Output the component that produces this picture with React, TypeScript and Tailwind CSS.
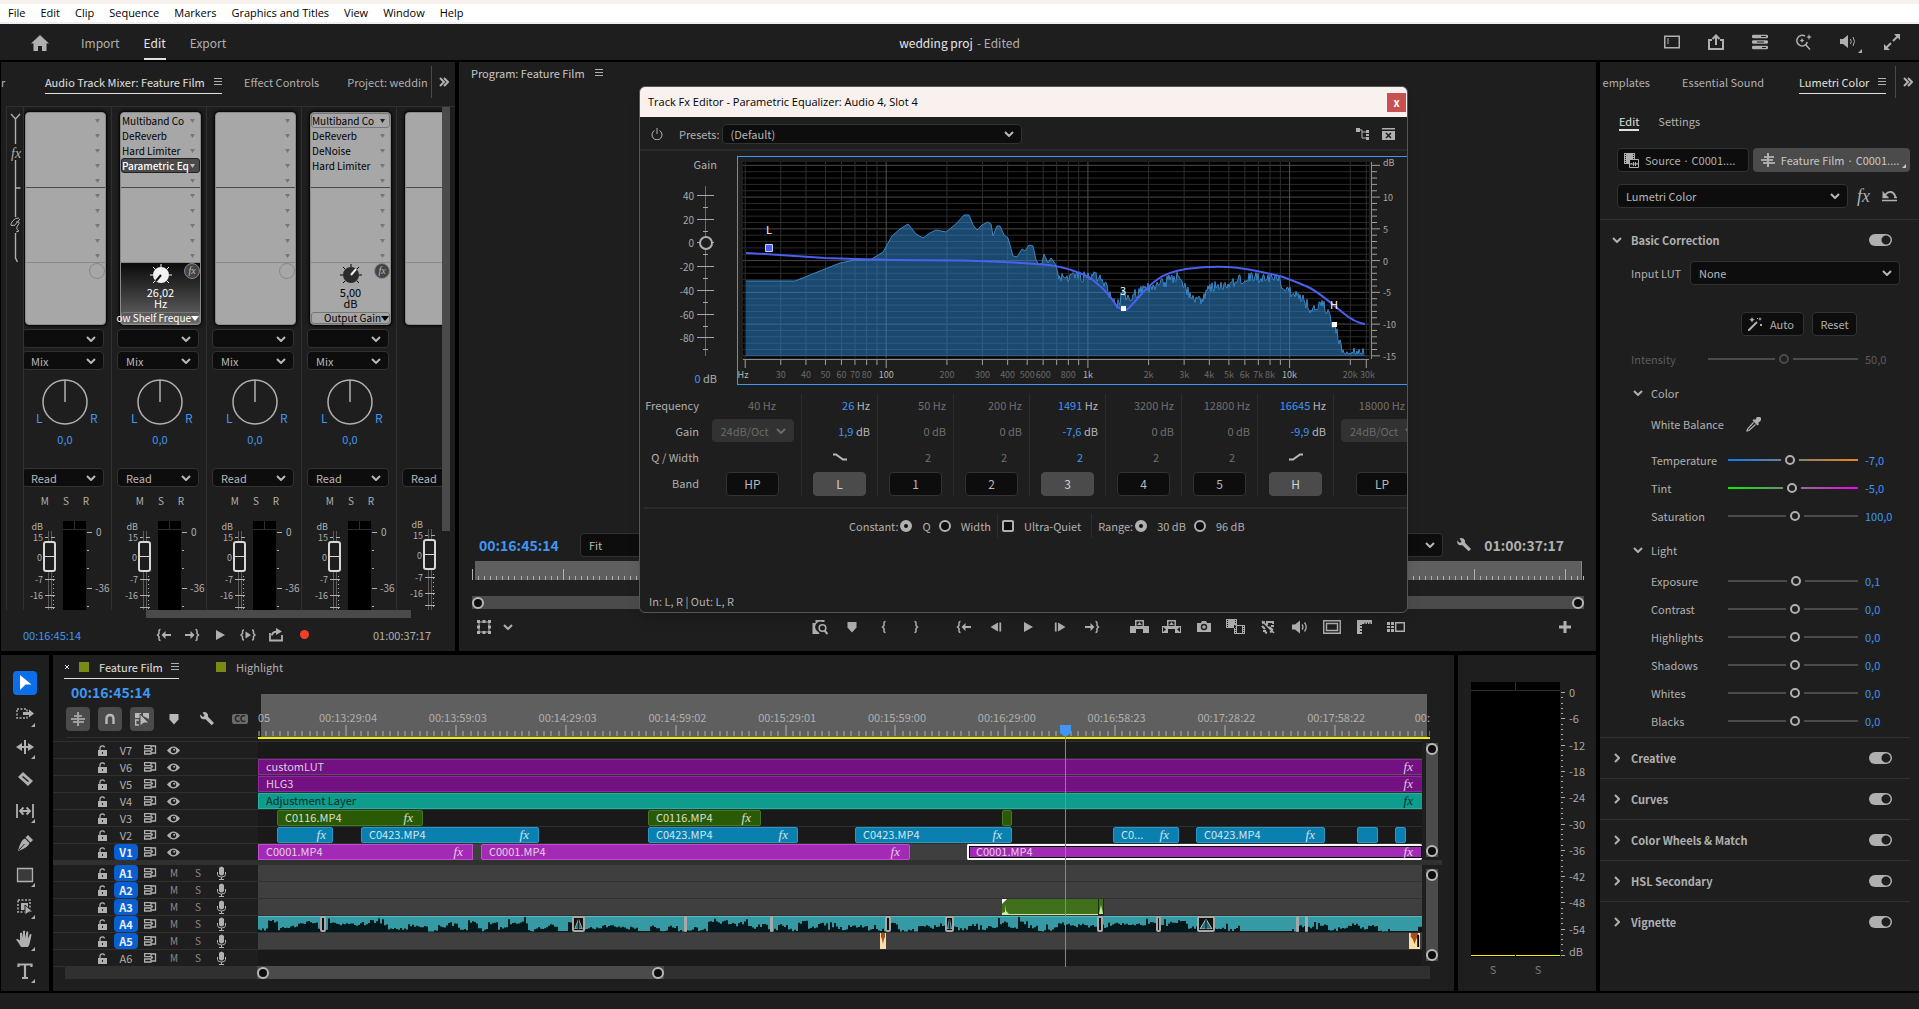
import type { ReactNode } from 'react';
import { clsx } from 'clsx';

/* ---------- helpers ---------- */

const rand = (n: number) => {
  const s = Math.sin(n * 127.1 + 11.7) * 43758.5453;
  return s - Math.floor(s);
};

function Icon({ w = 16, h, className, children }: { w?: number; h?: number; className?: string; children: ReactNode }) {
  return (
    <svg width={w} height={h ?? w} viewBox={`0 0 ${w} ${h ?? w}`} fill="none" stroke="currentColor" className={clsx('shrink-0', className)} aria-hidden="true">
      {children}
    </svg>
  );
}

function Chevron({ className }: { className?: string }) {
  return (
    <Icon w={10} h={6} className={className}>
      <path d="M1 1l4 4 4-4" strokeWidth="2" />
    </Icon>
  );
}

function Fx({ className }: { className?: string }) {
  return <span className={clsx("font-['Liberation_Serif',serif] italic", className)}>fx</span>;
}

function MenuLines() {
  return (
    <button aria-label="Panel menu" className="text-[#b0b0b0]">
      <Icon w={8}>
        <path d="M0 .5h8M0 3.500h8M0 6.500h8" />
      </Icon>
    </button>
  );
}

function MoreTabs() {
  return (
    <button aria-label="More panels" className="flex h-8 w-6 shrink-0 items-center justify-center border-l border-[#4a4a4a] text-[#b0b0b0]">
      <Icon w={10}>
        <path d="M1 1l4 4-4 4M5 1l4 4-4 4" strokeWidth="2" />
      </Icon>
    </button>
  );
}

function Dropdown({ label, value, className, dim }: { label: string; value: string; className?: string; dim?: boolean }) {
  return (
    <div className={clsx('relative shrink-0', className, dim ? 'text-[#6a6a6a]' : 'text-[#b8b8b8]')}>
      <select
        aria-label={label}
        className={clsx('h-full w-full appearance-none rounded-[4px] border pl-2 pr-5 leading-4 outline-none', dim ? 'border-[#323232] bg-[#323232]' : 'border-[#323232] bg-[#0d0d0d]')}
      >
        <option>{value}</option>
      </select>
      <Chevron className="pointer-events-none absolute right-2 top-1/2 -translate-y-1/2" />
    </div>
  );
}

/* ---------- top bars ---------- */

const menus = ['File', 'Edit', 'Clip', 'Sequence', 'Markers', 'Graphics and Titles', 'View', 'Window', 'Help'];

function TopBars() {
  return (
    <>
      <nav className="flex h-6 shrink-0 items-center gap-[15px] border-t-4 border-b-2 border-t-[#f7f1ee] border-b-[#f0f0f0] bg-white pl-2 font-['Open_Sans',sans-serif] text-[11px] leading-4 text-black">
        {menus.map((m) => (
          <button key={m}>{m}</button>
        ))}
      </nav>
      <header className="grid h-9 shrink-0 grid-cols-[1fr_auto_1fr] items-stretch bg-[#1e1e1e] text-[12px] leading-4">
        <div className="flex items-stretch gap-6 pl-[31px]">
          <button aria-label="Home" className="mr-2 pt-px text-[#b0b0b0]">
            <Icon w={18} h={16}>
              <path d="M9 0l9 8.500h-2.500V16h-4.500v-5h-4v5H2.500V8.500H0z" fill="currentColor" stroke="none" />
            </Icon>
          </button>
          <button className="pt-0.5">Import</button>
          <button className="border-b-2 border-[#e0e0e0] pt-1 text-[#e6e6e6]">Edit</button>
          <button className="pt-0.5">Export</button>
        </div>
        <div className="flex items-center gap-1 pt-0.5">
          <span className="text-[#e6e6e6]">wedding proj</span>
          <span>- Edited</span>
        </div>
        <div className="flex items-center justify-end gap-7 pr-[19px] text-[#b0b0b0]">
          <button aria-label="Workspaces">
            <Icon>
              <path d="M.75 2.250h14.500v11.500H.75z" strokeWidth="1.500" />
              <path d="M3 5h2M3 7h2M3 9h2" />
            </Icon>
          </button>
          <button aria-label="Quick export">
            <Icon>
              <path d="M4 6H1v9h14V6h-3M8 11V2M4.500 5L8 1.500 11.500 5" strokeWidth="2" />
            </Icon>
          </button>
          <button aria-label="Progress">
            <Icon>
              <path d="M1.500 2.500h13M1.500 8h13M1.500 13.500h13" strokeWidth="3.500" strokeLinecap="round" />
              <path d="M9 2.500h5M5 8h7M10 13.500h4" stroke="#1e1e1e" />
            </Icon>
          </button>
          <button aria-label="Search">
            <Icon>
              <path d="M9 2.200A5.300 5.300 0 1 0 11.300 8M9.500 10.500L14 15.500" strokeWidth="1.500" />
              <path d="M13 0l.8 2.200L16 3l-2.200.8L13 6l-.8-2.200L10 3l2.200-.8zM6 4l.8 1.700L8.500 6.500l-1.700.8L6 9l-.8-1.700L3.500 6.500l1.700-.8z" fill="currentColor" stroke="none" />
            </Icon>
          </button>
          <button aria-label="Sound" className="-mr-1.5">
            <Icon w={22} h={22}>
              <path d="M0 8h3l5-4v13l-5-4H0z" fill="currentColor" stroke="none" />
              <path d="M10.500 8q1.500 2.500 0 5M13 6q3 4.500 0 9" />
              <path d="M22 18v4h-4z" fill="currentColor" stroke="none" />
            </Icon>
          </button>
          <button aria-label="Full screen">
            <Icon>
              <path d="M9 7l4.500-4.500M7 9l-4.500 4.500" strokeWidth="2" />
              <path d="M10 0h6v6zM0 10v6h6z" fill="currentColor" stroke="none" />
            </Icon>
          </button>
        </div>
      </header>
    </>
  );
}

/* ---------- audio track mixer ---------- */

type StripData = { slots: string[]; active?: number; boxed?: number; param?: { value: string; unit: string; name: string; dark?: boolean }; master?: boolean };

const strips: StripData[] = [
  { slots: [] },
  { slots: ['Multiband Co', 'DeReverb', 'Hard Limiter', 'Parametric Eq'], active: 3, param: { value: '26,02', unit: 'Hz', name: 'ow Shelf Freque', dark: true } },
  { slots: [] },
  { slots: ['Multiband Co', 'DeReverb', 'DeNoise', 'Hard Limiter'], boxed: 0, param: { value: '5,00', unit: 'dB', name: 'Output Gain' } },
  { slots: [], master: true },
];

function Slot({ name, active, boxed }: { name?: string; active?: boolean; boxed?: boolean }) {
  return (
    <button
      aria-label={name ?? 'Empty slot'}
      className={clsx(
        'flex h-[15px] w-full items-center justify-between rounded-[3px] border pr-1 text-left leading-3',
        active ? 'border-[#222] bg-[#4a4a4a] font-medium text-white' : boxed ? 'border-[#777]' : 'border-transparent',
      )}
    >
      <span className="whitespace-nowrap">{name}</span>
      <svg width="5" height="4" className={active ? 'text-[#bbb]' : boxed ? 'text-[#222]' : 'text-[#777]'}>
        <path d="M0 0h5L2.500 4z" fill="currentColor" />
      </svg>
    </button>
  );
}

function EffectRack({ slots, active, boxed, param }: StripData) {
  return (
    <div className="ml-2 flex h-[213px] w-[81px] shrink-0 flex-col rounded-[4px] border border-[#8a8a8a] bg-[#a7a7a7] text-[10px] text-black shadow-[0_0_3px_1px_#000]">
      <div className="h-[75px] shrink-0 border-b border-[#4a4a4a]">
        {[0, 1, 2, 3, 4].map((i) => (
          <Slot key={i} name={slots[i]} active={active === i} boxed={boxed === i} />
        ))}
      </div>
      <div className="h-[75px] shrink-0 border-b border-[#8a8a8a]">
        {[5, 6, 7, 8, 9].map((i) => (
          <Slot key={i} />
        ))}
      </div>
      <div className={clsx('relative flex flex-1 flex-col items-center rounded-b-[3px]', param?.dark && 'bg-linear-to-b from-[#0c0c0c] to-[#6a6a6a] text-white')}>
        {param ? (
          <>
            <svg width="24" height="24" viewBox="0 0 24 24" className="shrink-0">
              <path d="M12 1v3M4 4l2 2M20 4l-2 2M1 12h3M23 12h-3M4 20l2-2M20 20l-2-2" stroke="currentColor" />
              <circle cx="12" cy="12" r="8" fill={param.dark ? '#f2f2f2' : '#2a2a2a'} />
              <path d={param.dark ? 'M12 12l-5 6' : 'M12 12l5-6'} stroke={param.dark ? '#111' : '#eee'} strokeWidth="2" />
            </svg>
            <span className="text-[11px] leading-[11px]">{param.value}</span>
            <span className="text-[11px] leading-[11px]">{param.unit}</span>
            <button className="mt-auto flex h-3 w-full items-center justify-end rounded-[3px] border border-[#777] leading-3 whitespace-nowrap">
              <span>{param.name}</span>
              <svg width="8" height="5" className="shrink-0">
                <path d="M0 0h8L4 5z" fill="currentColor" />
              </svg>
            </button>
            <span className="absolute top-0 right-0 flex size-4 items-center justify-center rounded-full border border-[#888] bg-[#444] text-[10px] leading-3 text-[#bbb]">
              <Fx />
            </span>
          </>
        ) : (
          <span className="absolute top-0 right-0 size-4 rounded-full border border-[#888]" />
        )}
      </div>
    </div>
  );
}

function Fader({ index, master }: { index: number; master?: boolean }) {
  return (
    <div className={clsx('relative h-[97px] shrink-0', master && '-mt-0.5')}>
      <svg width="95" height="99" viewBox="0 0 95 99" className="text-[9px]" fill="#b0b0b0">
        <text x="26" y="16" textAnchor="end">dB</text>
        <text x="26" y="27" textAnchor="end">15</text>
        <text x="25" y="47" textAnchor="end">0</text>
        <text x="26" y="69" textAnchor="end">-7</text>
        <text x="26" y="85" textAnchor="end">-16</text>
        <path d="M31.500 17v82M34.500 17v82" stroke="#5a5a5a" />
        <path d="M28 23.500h3M34 23.500h4M28 65.500h10M28 81.500h10M28 93.500h10" stroke="#b0b0b0" />
        <path d="M36.500 62v37" stroke="#b0b0b0" strokeDasharray="1 3" />
        {!master && (
          <>
            <path d="M46 7h23v92H46z" fill="#000" />
            <path d="M46 15.500h23M57.500 7v8" stroke="#2c2c2c" />
            <path d="M70 18.500h5M70 36.500h2M70 54.500h2M70 74.500h5M70 92.500h2" stroke="#b0b0b0" />
            <text x="79" y="22" className="text-[10px]">0</text>
            <text x="78" y="78" className="text-[10px]">-36</text>
          </>
        )}
      </svg>
      <input
        type="range"
        aria-label={`Volume ${index + 1}`}
        defaultValue={80}
        className="absolute top-[17px] left-[26px] h-20 w-[13px] appearance-none bg-transparent [direction:rtl] [writing-mode:vertical-lr] [&::-webkit-slider-thumb]:h-[31px] [&::-webkit-slider-thumb]:w-[13px] [&::-webkit-slider-thumb]:appearance-none [&::-webkit-slider-thumb]:rounded-[3px] [&::-webkit-slider-thumb]:border-2 [&::-webkit-slider-thumb]:border-[#d8d8d8] [&::-webkit-slider-thumb]:bg-[linear-gradient(#1e1e1e_13px,#d8d8d8_13px,#d8d8d8_14px,#1e1e1e_14px)]"
      />
    </div>
  );
}

function Strip({ data, index }: { data: StripData; index: number }) {
  return (
    <div className="flex w-[95px] shrink-0 flex-col border-l border-[#303030] pt-[5px]">
      <EffectRack {...data} />
      {data.master ? (
        <div className="h-[143px] shrink-0" />
      ) : (
        <>
          <Dropdown label="Send" value="" className="mt-1 ml-[5px] h-[19px] w-[82px]" />
          <Dropdown label="Output" value="Mix" className="mt-[3px] ml-[5px] h-[19px] w-[82px]" />
          <svg width="95" height="48" viewBox="0 0 95 48" className="mt-2 shrink-0 text-[12px]" fill="none">
            <circle cx="48" cy="24" r="22" stroke="#b0b0b0" strokeWidth="1.500" />
            <path d="M48 2v22" stroke="#b0b0b0" strokeWidth="1.500" />
            <text x="19" y="45" fill="#4096f3">L</text>
            <text x="73" y="45" fill="#4096f3">R</text>
          </svg>
          <div className="flex h-[42px] shrink-0 justify-center pt-[5px] pl-0.5 text-[#4096f3]">0,0</div>
        </>
      )}
      <Dropdown label="Automation mode" value="Read" className="ml-[5px] h-[19px] w-[82px]" />
      <div className="flex h-[27px] shrink-0 items-center justify-center gap-[14px] pl-0.5 text-[10px] leading-4">
        {!data.master && ['M', 'S', 'R'].map((k) => <button key={k}>{k}</button>)}
      </div>
      <Fader index={index} master={data.master} />
    </div>
  );
}

function TransportIcon({ kind }: { kind: string }) {
  const shapes: Record<string, ReactNode> = {
    in: (
      <>
        <path d="M4.500 2.500Q3 2.500 3 4v2.500L1.500 8 3 9.500V12q0 1.500 1.500 1.500" strokeWidth="1.500" />
        <path d="M5.500 8L9.500 4v3H15v2H9.500v3z" fill="currentColor" stroke="none" />
      </>
    ),
    out: (
      <>
        <path d="M11.500 2.500Q13 2.500 13 4v2.500L14.500 8 13 9.500V12q0 1.500-1.500 1.500" strokeWidth="1.500" />
        <path d="M10.500 8L6.500 4v3H1v2h5.500v3z" fill="currentColor" stroke="none" />
      </>
    ),
    play: <path d="M4 3l9 5-9 5z" fill="currentColor" stroke="none" />,
    loopIn: (
      <>
        <path d="M4 3Q2.500 3 2.500 4.500v2L1 8l1.500 1.500v2Q2.500 13 4 13M12 3q1.500 0 1.500 1.500v2L15 8l-1.500 1.500v2q0 1.500-1.500 1.500" strokeWidth="1.500" />
        <path d="M5.500 4.500L11 8l-5.500 3.500z" fill="currentColor" stroke="none" />
      </>
    ),
    export: (
      <>
        <path d="M2 6v7.500h12V8M4 8.500Q4 5 9 4.500" strokeWidth="1.800" />
        <path d="M8 1l6 3.500L8 8z" fill="currentColor" stroke="none" />
      </>
    ),
    back: (
      <>
        <path d="M10 3.500v9L2.500 8z" fill="currentColor" stroke="none" />
        <path d="M12.250 3.500v9" strokeWidth="1.800" />
      </>
    ),
    fwd: (
      <>
        <path d="M6 3.500v9L13.500 8z" fill="currentColor" stroke="none" />
        <path d="M3.750 3.500v9" strokeWidth="1.800" />
      </>
    ),
    marker: <path d="M3.500 3h9v5.500L8 13.500l-4.500-5z" fill="currentColor" stroke="none" />,
    braceL: <path d="M9.500 2.500Q8 2.500 8 4v2.500L6.500 8 8 9.500V12q0 1.500 1.500 1.500" strokeWidth="1.500" />,
    braceR: <path d="M6.500 2.500Q8 2.500 8 4v2.500L9.500 8 8 9.500V12q0 1.500-1.500 1.500" strokeWidth="1.500" />,
    find: (
      <>
        <path d="M3.500 1h9v2h-2a5 5 0 0 0-4 10l1 2H.5V4h3z" fill="currentColor" stroke="none" />
        <circle cx="10.500" cy="9" r="3.300" strokeWidth="1.600" />
        <path d="M12.500 11.500l3 3.500" strokeWidth="2" />
      </>
    ),
    wrench: <path d="M1 3.500l3 2.500 1.500-1.500L3.500 1.500Q7 0 9 3.500v2.200l6 6.300-2.300 2.300-6.200-6H4Q1 7.500 1 3.500z" fill="currentColor" stroke="none" />,
  };
  return <Icon>{shapes[kind]}</Icon>;
}

function Mixer() {
  return (
    <section className="flex w-[454px] shrink-0 flex-col overflow-hidden bg-[#1e1e1e]">
      <div className="flex h-11 shrink-0 items-start pt-1">
        <div className="flex h-8 min-w-0 flex-1 items-stretch overflow-hidden whitespace-nowrap">
          <button className="w-11 shrink-0 text-left">r</button>
          <div className="flex h-7 w-[177px] shrink-0 items-center justify-between border-b border-[#e0e0e0] pt-1 text-[#e0e0e0]">
            <button>Audio Track Mixer: Feature Film</button>
            <MenuLines />
          </div>
          <button className="ml-[22px] shrink-0">Effect Controls</button>
          <button className="ml-7 shrink-0">Project: weddin</button>
        </div>
        <MoreTabs />
      </div>
      <div className="ml-[5px] flex flex-1 overflow-hidden border-t border-l border-[#303030]">
        <div className="w-4 shrink-0 text-[#b0b0b0]">
          <svg width="16" height="160" viewBox="0 0 16 160" fill="none" stroke="currentColor">
            <path d="M4 7l4.500 5L13 7M8.500 12v25M8.500 53v28h5M8.500 81v29M8.500 126v25l2 4" strokeWidth="1.400" />
            <path d="M13 112l-6 7M12 111q-4-1-7 4t2 3M9 115q5-1 2 3t1 6l-3 1" />
          </svg>
          <Fx className="relative -top-[122px] left-1 text-[14px]" />
        </div>
        <div className="flex flex-1 overflow-hidden border-l border-[#303030]">
          <div className="-ml-2 flex">
            {strips.map((s, i) => (
              <Strip key={i} data={s} index={i} />
            ))}
          </div>
        </div>
        <div className="mr-[5px] h-[424px] w-2 shrink-0 bg-[#4a4a4a]" />
      </div>
      <div className="h-2 shrink-0 pl-[145px]">
        <div className="h-2 w-[265px] bg-[#4a4a4a]" />
      </div>
      <div className="flex h-[33px] shrink-0 items-center justify-between pr-6 pl-[22px]">
        <span className="text-[#4096f3]">00:16:45:14</span>
        <div className="flex items-center gap-3 pl-2.5 text-[#b0b0b0]">
          {['in', 'out', 'play', 'loopIn', 'export'].map((k) => (
            <button key={k} aria-label={k}>
              <TransportIcon kind={k} />
            </button>
          ))}
          <button aria-label="Record" className="ml-1 size-[9px] rounded-full bg-[#f0402c]" />
        </div>
        <span>01:00:37:17</span>
      </div>
    </section>
  );
}

/* ---------- parametric equalizer window ---------- */

const spectrumPoints: [number, number][] = [
  [9, 125], [58, 125], [103, 107], [118, 104], [133, 104], [146, 96], [155, 80], [163, 73], [171, 68], [179, 78], [186, 82], [193, 77],
  [199, 74], [209, 76], [220, 67], [227, 59], [232, 59], [236, 69], [240, 74], [245, 69], [251, 66], [254, 68], [256, 80], [260, 70],
  [263, 70], [267, 79], [271, 82], [276, 100], [280, 101], [285, 93], [288, 95], [292, 89], [296, 90], [299, 104], [302, 109], [305, 107],
  [307, 98], [311, 107], [314, 102], [319, 109], [322, 123],
];

const noisyPoints: [number, number][] = [
  [322, 121], [349, 121], [364, 120], [369, 130], [377, 146], [382, 149], [385, 137], [392, 141], [401, 137], [411, 131], [426, 127],
  [440, 120], [444, 124], [449, 134], [456, 141], [464, 147], [471, 132], [486, 129], [501, 124], [516, 121], [541, 124], [551, 134],
  [566, 144], [573, 152], [586, 149], [591, 157], [596, 171], [600, 174], [603, 189], [608, 197], [628, 197],
];

function buildSpectrum() {
  const pts = [...spectrumPoints];
  for (let i = 0; i < noisyPoints.length - 1; i++) {
    const [x0, y0] = noisyPoints[i];
    const [x1, y1] = noisyPoints[i + 1];
    for (let x = x0; x < x1; x++) {
      const y = y0 + ((y1 - y0) * (x - x0)) / (x1 - x0) + (rand(x) - 0.5) * 11;
      pts.push([x, Math.min(198, y)]);
    }
  }
  return pts.map((p) => p.join(' ')).join('L');
}

const spectrum = buildSpectrum();
const logX = (hz: number) => 149.2 + 201.7 * Math.log10(hz / 100);
const dbY = (db: number) => 104.6 - 6.35 * db;
const gridHz = [20, 30, 40, 50, 60, 70, 80, 90, 100, 200, 300, 400, 500, 600, 700, 800, 900, 1000, 2000, 3000, 4000, 5000, 6000, 7000, 8000, 9000, 10000, 20000, 24000];
const gridDb = Array.from({ length: 31 }, (_, i) => 15 - i);
const hzLabels: [number, string][] = [
  [19.5, 'Hz'], [30, '30'], [40, '40'], [50, '50'], [60, '60'], [70, '70'], [80, '80'], [100, '100'], [200, '200'], [300, '300'], [400, '400'], [500, '500'], [600, '600'],
  [800, '800'], [1000, '1k'], [2000, '2k'], [3000, '3k'], [4000, '4k'], [5000, '5k'], [6000, '6k'], [7000, '7k'], [8000, '8k'], [10000, '10k'], [20000, '20k'], [24300, '30k'],
];

function EqGraph() {
  return (
    <div className="min-w-0 flex-1 overflow-hidden border-y border-l border-[#4096f3]">
      <svg width="670" height="227" viewBox="1 1 670 227" className="block text-[10px]" fill="none">
        <path d="M6 6h626v196H6z" fill="#000" />
        {gridDb.map((db) => (
          <path key={db} d={`M6 ${dbY(db)}H632`} stroke={db % 5 ? '#2a2a2a' : '#4a4a4a'} />
        ))}
        {gridHz.map((hz) => (
          <path key={hz} d={`M${logX(hz)} 6V202`} stroke={[100, 1000, 10000].includes(hz) ? '#505050' : '#2e2e2e'} />
        ))}
        <path d={`M9 200L${spectrum}L628 200z`} fill="#3284c8" fillOpacity=".55" />
        <path d={`M${spectrum}`} stroke="#3888c8" />
        <path
          d="M9 97L28 98 58 100 88 102 118 103 158 104 227 104.500 267 106 292 107.500 312 109Q326 111 337 115T352 121Q364 130 372 139L379 149Q387 157 392 152L401 142Q411 130 421 123T449 113Q471 110 491 111T546 121Q562 127 571 131T605 156Q618 167 628 168"
          stroke="#4b5ff0"
          strokeWidth="2"
        />
        <path d="M6 203.500h626M634.500 6v197" stroke="#8a8a8a" />
        {gridHz.map((hz) => (
          <path key={hz} d={`M${logX(hz)} 204v${[20, 100, 1000, 10000, 24000].includes(hz) ? 8 : 5}`} stroke="#a0a0a0" />
        ))}
        {gridDb.map((db) => (
          <path key={db} d={`M635 ${dbY(db)}h${db % 5 ? 5 : 8}`} stroke="#a0a0a0" />
        ))}
        <g className="text-[9px]" textAnchor="middle">
          {hzLabels.map(([hz, t]) => (
            <text key={t} x={logX(hz)} y="222" fill={['Hz', '100', '1k', '10k'].includes(t) ? '#b8b8b8' : '#6a6a6a'}>
              {t}
            </text>
          ))}
        </g>
        <g className="text-[9px]" fill="#a8a8a8">
          <text x="646" y="10">dB</text>
          {[10, 5, 0, -5, -10, -15].map((db) => (
            <text key={db} x="646" y={dbY(db) + 4}>
              {db}
            </text>
          ))}
        </g>
        <path d="M28.500 88.500h7v7h-7z" fill="#4b5ff0" stroke="#c8d0ff" />
        <path d="M384 150h5v5h-5zM595 166h5v5h-5z" fill="#fff" />
        <g fill="#fff" className="text-[11px]" textAnchor="middle">
          <text x="32" y="78">L</text>
          <text x="386" y="139">3</text>
          <text x="597" y="153">H</text>
        </g>
      </svg>
    </div>
  );
}

type Band = { id: string; freq: string; gain?: string; q?: string; shelf?: 'low' | 'high'; slope?: boolean; on?: boolean };

const bands: Band[] = [
  { id: 'HP', freq: '40', slope: true },
  { id: 'L', freq: '26', gain: '1,9', shelf: 'low', on: true },
  { id: '1', freq: '50', gain: '0', q: '2' },
  { id: '2', freq: '200', gain: '0', q: '2' },
  { id: '3', freq: '1491', gain: '-7,6', q: '2', on: true },
  { id: '4', freq: '3200', gain: '0', q: '2' },
  { id: '5', freq: '12800', gain: '0', q: '2' },
  { id: 'H', freq: '16645', gain: '-9,9', shelf: 'high', on: true },
  { id: 'LP', freq: '18000', slope: true },
];

function BandColumn({ band }: { band: Band }) {
  const num = band.on ? 'text-[#4096f3]' : '';
  return (
    <div className={clsx('flex h-[102px] shrink-0 flex-col items-center border-[#2c2c2c] text-[11px]', band.slope ? 'w-[97px]' : 'w-[76px]', band.id !== 'HP' && 'border-l', band.on ? 'text-[#b8b8b8]' : 'text-[#707070]')}>
      <div className={clsx('flex h-[22px] w-full items-center justify-end', band.slope ? 'pr-[25px]' : 'pr-[7px]')}>
        <span>
          <span className={num}>{band.freq}</span> Hz
        </span>
      </div>
      {band.slope ? (
        <Dropdown label={`${band.id} slope`} value="24dB/Oct" className="mt-[3px] h-[23px] w-[82px]" dim />
      ) : (
        <div className="mt-[3px] flex h-[23px] w-full items-center justify-end pr-[7px]">
          <span>
            <span className={num}>{band.gain}</span> dB
          </span>
        </div>
      )}
      <div className={clsx('flex h-[30px] w-full items-center', band.shelf ? 'justify-center' : 'justify-end pr-[22px]', num)}>
        {band.q}
        {band.shelf && (
          <Icon w={14} h={8} className="text-[#b8b8b8]">
            <path d={band.shelf === 'low' ? 'M0 1.500h3l7 5h4' : 'M0 6.500h4l7-5h3'} strokeWidth="2" />
          </Icon>
        )}
      </div>
      <button className={clsx('h-6 w-[53px] rounded-[4px] border text-[12px] leading-4', band.on ? 'border-[#4b4b4b] bg-[#4b4b4b] text-[#d0d0d0]' : 'border-[#323232] bg-[#0d0d0d] text-[#b8b8b8]')}>
        {band.id}
      </button>
    </div>
  );
}

function Radio({ name, label, checked }: { name: string; label: string; checked?: boolean }) {
  return (
    <label className="flex items-center gap-2.5">
      <input
        type="radio"
        name={name}
        defaultChecked={checked}
        className="size-3 appearance-none rounded-full border-2 border-[#b0b0b0] bg-[#0d0d0d] checked:border-4"
      />
      {label}
    </label>
  );
}

function EqWindow() {
  return (
    <div role="dialog" aria-label="Track Fx Editor" className="absolute top-6 left-[180px] flex w-[769px] flex-col overflow-hidden rounded-md border border-[#555] bg-[#1e1e1e] shadow-lg">
      <div className="flex h-[30px] items-center justify-between bg-[#f9f1ed] pl-2 text-black">
        <span className="font-['Open_Sans',sans-serif] text-[11px]">Track Fx Editor - Parametric Equalizer: Audio 4, Slot 4</span>
        <button aria-label="Close" className="mr-px h-[19px] w-[19px] bg-[#c75050] text-[11px] leading-4 font-bold text-white">
          x
        </button>
      </div>
      <div className="flex h-[34px] items-center border-b-2 border-[#2a2a2a] pt-0.5 pr-3 pl-[11px]">
        <button aria-label="Power" className="text-[#b0b0b0]">
          <Icon w={12} h={12}>
            <path d="M3.500 2.500a5 5 0 1 0 5 0M6 0v6" />
          </Icon>
        </button>
        <span className="ml-4">Presets:</span>
        <Dropdown label="Preset" value="(Default)" className="ml-0.5 h-5 w-[300px]" />
        <div className="ml-auto flex gap-3 text-[#b0b0b0]">
          <button aria-label="Channel map">
            <Icon w={14} h={12}>
              <path d="M0 0h4v4H0zM10 2h3v3h-3zM10 6h3v2h-3zM10 9h3v3h-3z" fill="currentColor" stroke="none" />
              <path d="M3 2h3v8h4M6 4h4" />
            </Icon>
          </button>
          <button aria-label="Remove effect">
            <Icon w={13} h={12}>
              <path d="M0 0h13v1.500H0zM0 3h13v9H0z" fill="currentColor" stroke="none" />
              <path d="M4 5l5 5M9 5l-5 5" stroke="#1e1e1e" strokeWidth="1.500" />
            </Icon>
          </button>
        </div>
      </div>
      <div className="flex h-[234px] pt-[5px]">
        <div className="flex w-[97px] shrink-0 flex-col items-end pr-5 text-[11px]">
          <span className="h-[28px] shrink-0 leading-4">Gain</span>
          <div className="relative h-[174px] w-[50px] shrink-0">
            <svg width="50" height="174" viewBox="0 0 50 174" fill="#a8a8a8" className="text-[10px]">
              <path d="M38.500 2v170" stroke="#6a6a6a" />
              {[40, 20, 0, -20, -40, -60, -80].map((v, i) => (
                <g key={v}>
                  <path d={`M30 ${Math.round(i * 23.7) + 11.5}h17M36 ${Math.round(i * 23.7) + 23.5}h5`} stroke="#a8a8a8" />
                  <text x="27" y={Math.round(i * 23.7) + 15.500} textAnchor="end">
                    {v}
                  </text>
                </g>
              ))}
            </svg>
            <input
              type="range"
              aria-label="Gain"
              defaultValue={68}
              className="absolute top-0.5 left-8 h-[170px] w-[14px] appearance-none bg-transparent [direction:rtl] [writing-mode:vertical-lr] [&::-webkit-slider-thumb]:size-[14px] [&::-webkit-slider-thumb]:appearance-none [&::-webkit-slider-thumb]:rounded-full [&::-webkit-slider-thumb]:border-2 [&::-webkit-slider-thumb]:border-[#b0b0b0] [&::-webkit-slider-thumb]:bg-[#1e1e1e]"
            />
          </div>
          <span className="mt-3 shrink-0 leading-4">
            <span className="text-[#4096f3]">0</span> dB
          </span>
        </div>
        <EqGraph />
      </div>
      <div className="ml-1 flex h-[124px] border-b-2 border-[#2a2a2a] pt-[9px]">
        <div className="flex w-[60px] shrink-0 flex-col items-end pr-[5px] text-[11px] leading-[26px]">
          <span className="-mt-0.5">Frequency</span>
          <span>Gain</span>
          <span>Q / Width</span>
          <span>Band</span>
        </div>
        {bands.map((b) => (
          <BandColumn key={b.id} band={b} />
        ))}
      </div>
      <div className="flex h-[34px] items-center pl-[209px] text-[11px]">
        <span className="mr-0.5">Constant:</span>
        <div className="flex items-center gap-2">
          <Radio name="constant" label="Q" checked />
          <Radio name="constant" label="Width" />
        </div>
        <label className="ml-1.5 flex h-6 items-center gap-2.5 border-l border-[#2c2c2c] pl-1">
          <input type="checkbox" className="size-3 appearance-none rounded-[2px] border-2 border-[#b0b0b0] bg-[#0d0d0d]" />
          Ultra-Quiet
        </label>
        <span className="mr-0.5 ml-2.5 flex h-6 items-center border-l border-[#2c2c2c] pl-1.5">Range:</span>
        <div className="flex items-center gap-2">
          <Radio name="range" label="30 dB" checked />
          <Radio name="range" label="96 dB" />
        </div>
      </div>
      <div className="flex h-[69px] items-end pb-[3px] pl-[9px] text-[11px] leading-4">In: L, R | Out: L, R</div>
    </div>
  );
}

/* ---------- program monitor ---------- */

const ringKnob = 'size-3 shrink-0 rounded-full border-2 border-[#b8b8b8] bg-[#0d0d0d]';
const toolButton = 'flex h-6 w-8 shrink-0 items-center justify-center';

function Program() {
  return (
    <section className="relative flex min-w-0 flex-1 flex-col bg-[#1e1e1e]">
      <div className="flex h-[22px] items-center gap-2.5 pl-3">
        <span className="text-[#c8c8c8]">Program: Feature Film</span>
        <MenuLines />
      </div>
      <div className="flex-1" />
      <div className="flex h-6 items-center pr-8 pl-5">
        <span className="w-[101px] text-[14px] font-bold text-[#4096f3]">00:16:45:14</span>
        <Dropdown label="Zoom level" value="Fit" className="h-6 w-20" />
        <Dropdown label="Playback resolution" value="Full" className="ml-auto h-6 w-20" />
        <button aria-label="Settings" className="mr-3 ml-[13px] text-[#b0b0b0]">
          <TransportIcon kind="wrench" />
        </button>
        <span className="text-[14px] font-bold">01:00:37:17</span>
      </div>
      <div className="mt-1 ml-[13px] h-5 pr-[14px]">
        <div className="relative ml-[3px] h-[19px] border-r border-[#4096f3] bg-[#5f5f5f]">
          <svg width="100%" height="19" className="absolute top-0 -left-[3px] overflow-visible" stroke="#b0b0b0">
            {Array.from({ length: 184 }, (_, i) => (
              <path key={i} d={`M${Math.round(i * 6.07) + 0.5} ${i % 15 ? 15 : 8}V19`} />
            ))}
          </svg>
        </div>
      </div>
      <div className="mt-[15px] mr-3 ml-[13px] flex h-[13px] items-center justify-between bg-[#4b4b4b]">
        <span className={ringKnob} />
        <span className={ringKnob} />
      </div>
      <div className="mt-[6px] mb-[12px] flex h-6 items-center pr-[25px] pl-[18px] text-[#b0b0b0]">
        <button aria-label="Guides" className="flex items-center gap-3">
          <Icon w={14} h={14}>
            <path d="M2 2h10v10H2z" />
            <path d="M0 0h3v3H0zM5.500 0h3v3h-3zM11 0h3v3h-3zM0 5.500h3v3H0zM11 5.500h3v3h-3zM0 11h3v3H0zM5.500 11h3v3h-3zM11 11h3v3h-3z" fill="currentColor" stroke="none" />
          </Icon>
          <Chevron />
        </button>
        <div className="ml-auto flex items-center">
          {['find', 'marker', 'braceL', 'braceR', 'in', 'back', 'play', 'fwd', 'out'].map((k) => (
            <button key={k} aria-label={k} className={clsx(toolButton, k === 'in' && 'ml-4')}>
              <TransportIcon kind={k} />
            </button>
          ))}
          <button aria-label="Lift" className={clsx(toolButton, 'ml-4')}>
            <Icon w={20} h={14}>
              <path d="M0 6h6v7H0zM13 6h6v7h-6zM6 7h7v2H6z" fill="currentColor" stroke="none" />
              <path d="M5.750.75h7.500v6h-7.500z" strokeWidth="1.500" />
              <path d="M9.500 2L12 5H7z" fill="currentColor" stroke="none" />
            </Icon>
          </button>
          <button aria-label="Extract" className={toolButton}>
            <Icon w={20} h={14}>
              <path d="M0 6h6v7H0zM13 6h6v7h-6zM6 7h7v2H6z" fill="currentColor" stroke="none" />
              <path d="M5.750.75h7.500v6h-7.500z" strokeWidth="1.500" />
              <path d="M9.500 2L12 5H7z" fill="currentColor" stroke="none" />
              <path d="M1 7l3 2.500L1 12zM18 7l-3 2.500 3 2.500z" fill="#1e1e1e" stroke="none" />
            </Icon>
          </button>
          <button aria-label="Export frame" className={toolButton}>
            <Icon>
              <path d="M1 4h4l1-2h4l1 2h4v9H1z" fill="currentColor" stroke="none" />
              <circle cx="8" cy="8" r="2.500" stroke="#1e1e1e" strokeWidth="1.400" />
            </Icon>
          </button>
          <button aria-label="Comparison view" className={toolButton}>
            <Icon w={20} h={16}>
              <path d="M0 0h11v9H0zM8 6h11v9H8z" fill="currentColor" stroke="none" />
              <path d="M1.500 1v8M9.500 1v4" stroke="#1e1e1e" strokeDasharray="1 1" />
              <path d="M11 7h5v7h-5zM8 6v3h1.500V6z" fill="#1e1e1e" stroke="none" />
              <path d="M9.500 7v8M17.500 7v8" stroke="#1e1e1e" strokeDasharray="1 1" />
            </Icon>
          </button>
          <button aria-label="Proxies" className={toolButton}>
            <Icon>
              <path d="M2 2l12 12" strokeWidth="1.500" />
              <path d="M2 4l3-1M7 6V3h6v2M2 7l3 3M3 12h3M9 8l4 3M10 13l3-1M11 7h3M5 13l2 1" strokeWidth="2" />
            </Icon>
          </button>
          <button aria-label="Mute" className={toolButton}>
            <Icon>
              <path d="M0 5.500h3l5-4v13l-5-4H0z" fill="currentColor" stroke="none" />
              <path d="M10 5.500q2 2.500 0 5M12.500 3.500q3.500 4.500 0 9" strokeWidth="1.300" />
            </Icon>
          </button>
          <button aria-label="Safe margins" className={toolButton}>
            <Icon w={18} h={14}>
              <path d="M.75.75h16.500v12.500H.75zM3.500 3.500h11v7h-11z" strokeWidth="1.400" />
            </Icon>
          </button>
          <button aria-label="Rulers" className={toolButton}>
            <Icon w={15} h={15}>
              <path d="M0 0h15v4h-1.500V2.500h-1V4H11V2.500h-1V4H8.500V2.500h-1V4H5v1H3v1h2v2H3v1h2v2H3v1h2v2H0z" fill="currentColor" stroke="none" />
            </Icon>
          </button>
          <button aria-label="Multi-camera" className={toolButton}>
            <Icon w={18} h={10}>
              <path d="M0 0h7v10H0z" fill="currentColor" stroke="none" />
              <path d="M3.500 0v10M0 3.500h7M0 6.500h7" stroke="#1e1e1e" />
              <path d="M8.700.7h8.600v8.600H8.700z" strokeWidth="1.400" />
            </Icon>
          </button>
        </div>
        <button aria-label="Button editor" className="ml-[147px]">
          <Icon w={12} h={12}>
            <path d="M6 0v12M0 6h12" strokeWidth="3" />
          </Icon>
        </button>
      </div>
      <EqWindow />
    </section>
  );
}

/* ---------- tools ---------- */

const tools: { name: string; art: ReactNode }[] = [
  { name: 'Selection', art: <path d="M4 1l11.500 9.500H9.500L4 16z" fill="#fff" stroke="none" /> },
  {
    name: 'Track select',
    art: (
      <>
        <path d="M1 3h10v9H1z" strokeDasharray="2 1.500" strokeWidth="1.400" />
        <path d="M7 6h6V3.500L18 7.500l-5 4V9H7z" fill="currentColor" stroke="none" />
      </>
    ),
  },
  {
    name: 'Ripple edit',
    art: (
      <>
        <path d="M9 2v14M6 9h6" strokeWidth="2" />
        <path d="M0 9l6-4v8zM18 9l-6-4v8z" fill="currentColor" stroke="none" />
      </>
    ),
  },
  {
    name: 'Razor',
    art: (
      <>
        <path d="M7 2l10 9-5 5L2 7z" fill="currentColor" stroke="none" />
        <path d="M6.500 6.500l6 5" stroke="#1e1e1e" strokeWidth="1.500" />
      </>
    ),
  },
  { name: 'Slip', art: <path d="M1 2v14M17 2v14M4 9h10M7.500 5.500L4 9l3.500 3.500M10.500 5.500L14 9l-3.500 3.500" strokeWidth="1.800" /> },
  {
    name: 'Pen',
    art: (
      <>
        <path d="M12 1l5 5-2.500 2.500L9.500 3.500zM9 4.500l4.500 4.500q-1 4.500-11.500 8Q4.500 6 9 4.500z" fill="currentColor" stroke="none" />
        <path d="M3 16l5.500-6" stroke="#1e1e1e" />
      </>
    ),
  },
  { name: 'Rectangle', art: <path d="M1.500 2.500h15v13h-15z" fill="#3a3a3a" strokeWidth="1.300" /> },
  {
    name: 'Object select',
    art: (
      <>
        <path d="M2 2h12v12H2z" strokeDasharray="2 1.500" strokeWidth="1.500" />
        <path d="M5 5h7v7H5z" fill="currentColor" stroke="none" />
        <path d="M9 7l8 7h-4l-4 3z" fill="currentColor" stroke="#1e1e1e" />
      </>
    ),
  },
  { name: 'Hand', art: <path d="M5 17Q3 13 0 9.500q1.500-1.500 4 1V3q1.500-1 2 0l.8 5L7 1q1-1 2 0v7l1.500-6.500q1.300-.7 1.800.5L12 8.500 14 4q1.500-.5 1.500 1L14 12q-.5 3-2 5z" fill="currentColor" stroke="none" /> },
  { name: 'Type', art: <path d="M2.500 5V2.500h13V5M9 2v14M6 16h6" strokeWidth="2.200" /> },
];

function Tools() {
  return (
    <aside className="flex w-12 shrink-0 flex-col items-center gap-2 bg-[#1e1e1e] pt-4 text-[#b0b0b0]">
      {tools.map((t, i) => (
        <button key={t.name} aria-label={t.name} className={clsx('relative flex size-6 shrink-0 items-center justify-center rounded-[4px]', i === 0 && 'bg-[#0a6fe8]')}>
          <Icon w={18}>{t.art}</Icon>
          {![0, 3, 5].includes(i) && (
            <svg width="4" height="4" className="absolute right-0.5 bottom-0">
              <path d="M4 0v4H0z" fill="currentColor" />
            </svg>
          )}
        </button>
      ))}
    </aside>
  );
}

/* ---------- timeline ---------- */

const SPAN = 1164;
const pct = (n: number) => `${(n / SPAN) * 100}%`;

type Clip = { from: number; to: number; name?: string; fx?: boolean; tone: string; selected?: boolean };

const tones: Record<string, string> = {
  purple: 'bg-[#731082] border-[#8d2a9c] text-[#dccbe0]',
  teal: 'bg-[#0e9c8c] border-[#1fb3a2] text-[#062c28]',
  green: 'bg-[#2a5a06] border-[#457822] text-[#d8e0d0]',
  blue: 'bg-[#0a80b0] border-[#2a98c6] text-[#d0e6f0]',
  magenta: 'bg-[#a32ab4] border-[#c050d0] text-[#e6d0ea]',
};

const videoTracks: { id: string; target?: boolean; clips: Clip[] }[] = [
  { id: 'V7', clips: [] },
  { id: 'V6', clips: [{ from: 0, to: 1164, name: 'customLUT', fx: true, tone: 'purple' }] },
  { id: 'V5', clips: [{ from: 0, to: 1164, name: 'HLG3', fx: true, tone: 'purple' }] },
  { id: 'V4', clips: [{ from: 0, to: 1164, name: 'Adjustment Layer', fx: true, tone: 'teal' }] },
  {
    id: 'V3',
    clips: [
      { from: 19, to: 165, name: 'C0116.MP4', fx: true, tone: 'green' },
      { from: 390, to: 503, name: 'C0116.MP4', fx: true, tone: 'green' },
      { from: 744, to: 754, tone: 'green' },
    ],
  },
  {
    id: 'V2',
    clips: [
      { from: 19, to: 75, fx: true, tone: 'blue' },
      { from: 103, to: 281, name: 'C0423.MP4', fx: true, tone: 'blue' },
      { from: 390, to: 540, name: 'C0423.MP4', fx: true, tone: 'blue' },
      { from: 597, to: 754, name: 'C0423.MP4', fx: true, tone: 'blue' },
      { from: 855, to: 921, name: 'C0...', fx: true, tone: 'blue' },
      { from: 938, to: 1067, name: 'C0423.MP4', fx: true, tone: 'blue' },
      { from: 1099, to: 1120, tone: 'blue' },
      { from: 1137, to: 1148, tone: 'blue' },
    ],
  },
  {
    id: 'V1',
    target: true,
    clips: [
      { from: 0, to: 215, name: 'C0001.MP4', fx: true, tone: 'magenta' },
      { from: 223, to: 652, name: 'C0001.MP4', fx: true, tone: 'magenta' },
      { from: 709, to: 1164, name: 'C0001.MP4', fx: true, tone: 'magenta', selected: true },
    ],
  },
];

const audioTracks = ['A1', 'A2', 'A3', 'A4', 'A5', 'A6'];

function buildWave() {
  let d = 'M0 16';
  for (let x = 0; x < SPAN; x += 2) {
    const quiet = (x > 980 && x < 1034) || (x > 298 && x < 310) || (x > 378 && x < 392) || (x > 1130 && x < 1160);
    const burst = rand(Math.floor(x / 10) + 3) * 10 - 1;
    const tail = x > 1060 ? 0.7 : 1;
    const level = quiet ? 1 : Math.max(0.5, (burst + rand(x) * 4 + (rand(x * 3) > 0.97 ? 5 : 0)) * tail);
    d += `V${(16 - level).toFixed(1)}H${x + 2}`;
  }
  return `${d}V16z`;
}

const wave = buildWave();

// [offset, width, shows the crossfade mark]
const transitions: [number, number, boolean][] = [
  [62, 6, false], [314, 13, true], [426, 3, false], [512, 3, false], [627, 6, false], [687, 9, true], [839, 6, false], [898, 5, false], [939, 18, true], [1038, 3, false], [1047, 3, false],
];

function TrackHead({ id, target, audio }: { id: string; target?: boolean; audio?: boolean }) {
  return (
    <div className="flex h-full w-[205px] shrink-0 items-center pl-[45px] text-[#b0b0b0]">
      <button aria-label={`Lock ${id}`}>
        <Icon w={9} h={11}>
          <path d="M2 5V3q0-2.300 3-2 1.500.3 1.500 1.500" strokeWidth="1.300" />
          <path d="M0 5h9v6H0z" fill="currentColor" stroke="none" />
          <path d="M4.500 7v2" stroke="#1e1e1e" />
        </Icon>
      </button>
      <button className={clsx('ml-[7px] h-4 w-6 rounded-[4px] text-[11px] leading-[14px]', target && 'bg-[#0a5fd0] font-bold text-[#e8f0ff]')}>{id}</button>
      <button aria-label={`Sync lock ${id}`} className="ml-1.5">
        <Icon w={13} h={10}>
          <path d="M.6.6h6.400v3H.6zM.6 6h6.400v3H.6zM7.500 1h4v7h-4" strokeWidth="1.300" />
          <path d="M7 3.500h2v2H7z" fill="currentColor" stroke="none" />
        </Icon>
      </button>
      {audio ? (
        <>
          <button aria-label={`Mute ${id}`} className="ml-[11px] w-3 text-[10px] leading-4 text-[#8a8a8a]">M</button>
          <button aria-label={`Solo ${id}`} className="ml-3 w-3 text-[10px] leading-4 text-[#8a8a8a]">S</button>
          <button aria-label={`Record ${id}`} className="ml-[13px]">
            <Icon w={9} h={14}>
              <path d="M2 2q2.500-3 5 0v6q-2.500 3-5 0z" fill="currentColor" stroke="none" />
              <path d="M.5 6v2.500q0 2.500 4 2.500t4-2.500V6M4.500 11v2M2 13.500h5" />
            </Icon>
          </button>
        </>
      ) : (
        <button aria-label={`Toggle ${id} output`} className="ml-2.5">
          <Icon w={13} h={9}>
            <path d="M0 4.500Q6.500-3.500 13 4.500 6.500 12.500 0 4.500z" fill="currentColor" stroke="none" />
            <circle cx="6.500" cy="4.500" r="2.700" fill="#1e1e1e" stroke="none" />
            <circle cx="7.200" cy="3.800" r="1" fill="currentColor" stroke="none" />
          </Icon>
        </button>
      )}
    </div>
  );
}

function ClipBlock({ clip }: { clip: Clip }) {
  return (
    <div
      className={clsx(
        'absolute inset-y-0 flex items-start justify-between overflow-hidden border text-[11px]',
        tones[clip.tone],
        clip.from > 0 && 'rounded-[2px]',
        clip.to - clip.from > 60 ? 'px-[7px]' : 'px-1',
        clip.to === SPAN && 'border-r-0',
        clip.selected ? 'border-2 border-white px-1.5 leading-[11px] shadow-[inset_0_0_0_1px_#000]' : 'leading-[13px]',
      )}
      style={{ left: pct(clip.from), width: pct(clip.to - clip.from) }}
    >
      <span className="whitespace-nowrap">{clip.name}</span>
      {clip.fx && <Fx className="mr-0.5 text-[13px]" />}
    </div>
  );
}

function AudioLane({ id }: { id: string }) {
  if (id === 'A3')
    return (
      <>
        <div className="absolute inset-y-0 border-b border-[#c8f0a0] bg-[#40701c]" style={{ left: pct(744), width: pct(96) }}>
          <svg width="10" height="15" className="block">
            <path d="M0 0h5L0 5z" fill="#fff" />
            <path d="M0 15v-1l3-1V6l1 6 3 3z" fill="#c8f0a0" />
          </svg>
        </div>
        <div className="absolute inset-y-0 border-x border-b border-[#1a2a0c] bg-[#40701c]" style={{ left: pct(840), width: pct(6) }}>
          <svg width="4" height="15" className="block">
            <path d="M0 15l2-9 2 9z" fill="#c8f0a0" />
          </svg>
        </div>
      </>
    );
  if (id === 'A4')
    return (
      <div className="absolute inset-0 border-t border-[#5cb8c0] bg-[#359aa4]">
        <svg width="100%" height="15" viewBox={`0 0 ${SPAN} 16`} preserveAspectRatio="none" className="block">
          <path d={wave} fill="#04181c" />
        </svg>
        {transitions.map(([at, width, mark]) => (
          <span
            key={at}
            className={clsx('absolute -top-px bottom-0 flex items-center justify-center rounded-[2px] border-[#a8a8a8]', width > 4 ? 'border-2 bg-[#101010]' : 'border-x bg-[#a8a8a8]')}
            style={{ left: pct(at), width: pct(width) }}
          >
            {mark && (
              <svg width="100%" height="10" viewBox="0 0 14 10" preserveAspectRatio="none">
                <path d="M1 10L7 0l6 10z" fill="#2c6f76" stroke="#a8c8cc" />
                <path d="M7 0v10" stroke="#101010" />
              </svg>
            )}
          </span>
        ))}
      </div>
    );
  if (id === 'A5')
    return (
      <>
        {[622, 1151].map((at, i) => (
          <div key={at} className="absolute inset-y-0 overflow-hidden bg-[#fae0a8]" style={{ left: pct(at), width: pct(i ? 11 : 6) }}>
            <svg width="100%" height="16" viewBox="0 0 6 16" preserveAspectRatio="none" className="block">
              <path d="M1 0h4v4L4 6 3 11 2 6 1 4z" fill="#a84e1a" />
              {i === 1 && <path d="M5 2v12" stroke="#000" />}
            </svg>
          </div>
        ))}
      </>
    );
  return null;
}

function VerticalZoom({ className }: { className: string }) {
  return (
    <div className={clsx('flex w-8 shrink-0 pl-1', className)}>
      <div className="flex w-3 flex-col justify-between bg-[#4b4b4b]">
        <span className={ringKnob} />
        <span className={ringKnob} />
      </div>
    </div>
  );
}

const rulerLabels = ['00:13:29:04', '00:13:59:03', '00:14:29:03', '00:14:59:02', '00:15:29:01', '00:15:59:00', '00:16:29:00', '00:16:58:23', '00:17:28:22', '00:17:58:22'];
const rulerPct = (n: number) => `${(n / 1172) * 100}%`;

function Timeline() {
  return (
    <section className="relative flex min-w-0 flex-1 flex-col bg-[#1e1e1e]">
      <div className="flex h-[26px] items-start pl-[11px]">
        <div className="flex h-6 w-[115px] items-center border-b border-[#e0e0e0] text-[#e0e0e0]">
          <button aria-label="Close sequence">
            <Icon w={6} h={6}>
              <path d="M1 1l4 4M5 1L1 5" />
            </Icon>
          </button>
          <span className="ml-[9px] size-[10px] bg-[#7a8a14]" />
          <button className="ml-2.5 whitespace-nowrap">Feature Film</button>
          <span className="ml-auto flex">
            <MenuLines />
          </span>
        </div>
        <div className="ml-[37px] flex h-6 items-center">
          <span className="size-[10px] bg-[#7a8a14]" />
          <button className="ml-2.5">Highlight</button>
        </div>
      </div>
      <div className="flex h-[60px]">
        <div className="w-[205px] shrink-0 pl-[13px]">
          <div className="h-[26px] pl-[5px] text-[14px] leading-[22px] font-bold text-[#4096f3]">00:16:45:14</div>
          <div className="flex h-[31px] items-start gap-2 border-b border-[#303030] text-[#b8b8b8]">
            <button aria-label="Nest" className="flex size-6 items-center justify-center rounded-[4px] bg-[#4b4b4b]">
              <Icon w={14} h={14}>
                <path d="M7 0v14M3 4h3M0 7h6M2 10h4M8 4h3M8 7h6M8 10h5" strokeWidth="1.600" />
              </Icon>
            </button>
            <button aria-label="Snap" className="flex size-6 items-center justify-center rounded-[4px] bg-[#4b4b4b]">
              <Icon w={12} h={12}>
                <path d="M2.500 11V6q0-4 3.500-4t3.500 4v5" strokeWidth="2.400" />
              </Icon>
            </button>
            <button aria-label="Linked selection" className="flex size-6 items-center justify-center rounded-[4px] bg-[#4b4b4b]">
              <Icon w={14} h={14}>
                <path d="M0 1h6v5H0zM8 1h6v6L8 4z" fill="currentColor" stroke="none" />
                <path d="M4 8H.7v5H4" strokeWidth="1.400" />
                <path d="M5 2l9 9H9l-4 3z" fill="currentColor" stroke="#4b4b4b" />
              </Icon>
            </button>
            <div className="flex h-6 flex-1 items-center justify-between pr-2.5 pl-1">
              <button aria-label="Add marker">
                <TransportIcon kind="marker" />
              </button>
              <button aria-label="Timeline settings">
                <TransportIcon kind="wrench" />
              </button>
              <button className="h-[10px] w-4 rounded-[2px] bg-[#6a6a6a] text-[9px] leading-[10px] font-bold text-[#1e1e1e]">CC</button>
            </div>
          </div>
        </div>
        <div className="relative mr-6 mt-[13px] h-[45px] flex-1 overflow-hidden border-b-2 border-[#f0f000]">
          <div className="mx-[3px] h-full bg-[#5f5f5f]" />
          <svg width="100%" height="43" className="absolute top-0 left-0 text-[11px]" fill="#b0b0b0">
            {Array.from({ length: 161 }, (_, i) => {
              const x = rulerPct(Math.round(i * 7.32 + 0.5));
              return <line key={i} x1={x} x2={x} y1={(i - 12) % 15 ? 37 : 31} y2={42} stroke="#b0b0b0" />;
            })}
            <text x="0" y="28">05</text>
            {rulerLabels.map((t, i) => (
              <text key={t} x={rulerPct(90 + i * 109.8)} y="28" textAnchor="middle">
                {t}
              </text>
            ))}
            <text x="100%" y="28" textAnchor="end">00:</text>
          </svg>
        </div>
      </div>
      <div className="flex">
        <div className="min-w-0 flex-1">
          {videoTracks.map((t) => (
            <div key={t.id} className="flex h-[17px] border-t border-[#303030]">
              <TrackHead id={t.id} target={t.target} />
              <div className={clsx('relative flex-1', t.target ? 'bg-[#3f3f3f]' : 'bg-[#191919]')}>
                {t.clips.map((c) => (
                  <ClipBlock key={c.from} clip={c} />
                ))}
              </div>
            </div>
          ))}
        </div>
        <VerticalZoom className="pt-0.5 pb-[3px]" />
      </div>
      <div className="mr-3 h-[5px] bg-[#303030]" />
      <div className="flex">
        <div className="min-w-0 flex-1">
          {audioTracks.map((id) => (
            <div key={id} className="flex h-[17px] border-b border-[#303030]">
              <TrackHead id={id} target={id !== 'A6'} audio />
              <div className={clsx('relative flex-1', id === 'A6' ? 'bg-[#191919]' : 'bg-[#3f3f3f]')}>
                <AudioLane id={id} />
              </div>
            </div>
          ))}
        </div>
        <VerticalZoom className="pt-1 pb-[6px]" />
      </div>
      <div className="-mt-px mr-6 ml-3 flex h-[13px] bg-[#303030] pl-[192px]">
        <div className="flex w-[407px] items-center justify-between bg-[#4b4b4b]">
          <span className={ringKnob} />
          <span className={ringKnob} />
        </div>
      </div>
      {/* playhead */}
      <div className="pointer-events-none absolute top-[70px] right-8 bottom-[24px] left-[205px]">
        <div className="absolute inset-y-0 w-px bg-[#4096f3]" style={{ left: pct(807) }}>
          <svg width="11" height="12" className="absolute top-0 -left-[5px]">
            <path d="M0 0h11v8l-5.500 4L0 8z" fill="#4096f3" />
          </svg>
        </div>
      </div>
    </section>
  );
}

/* ---------- audio meters ---------- */

function Meters() {
  return (
    <section className="w-[138px] shrink-0 bg-[#1e1e1e] pt-[27px] pl-[13px] text-[11px]">
      <svg width="118" height="300" viewBox="0 0 118 300" fill="#a8a8a8">
        <path d="M0 0h89v275H0z" fill="#000" />
        <path d="M0 8.500h89M44.500 0v8" stroke="#2c2c2c" />
        <path d="M0 273.500h44M45 273.500h44" stroke="#f0f000" />
        {Array.from({ length: 51 }, (_, i) => (
          <path key={i} d={`M90 ${Math.round(i * 5.26) + 10.5}h${i % 5 ? 2 : 4}`} stroke="#a8a8a8" />
        ))}
        {['0', '-6', '-12', '-18', '-24', '-30', '-36', '-42', '-48', '-54', 'dB'].map((t, i) => (
          <text key={t} x="98" y={i === 10 ? 274 : Math.round(i * 26.3) + 15}>
            {t}
          </text>
        ))}
        <text x="22" y="292" textAnchor="middle" fill="#7a7a7a">S</text>
        <text x="67" y="292" textAnchor="middle" fill="#7a7a7a">S</text>
      </svg>
    </section>
  );
}

/* ---------- lumetri color ---------- */

const thumb =
  'appearance-none bg-transparent [&::-webkit-slider-runnable-track]:h-0.5 [&::-webkit-slider-thumb]:-mt-1 [&::-webkit-slider-thumb]:size-[10px] [&::-webkit-slider-thumb]:appearance-none [&::-webkit-slider-thumb]:rounded-full [&::-webkit-slider-thumb]:border-2 [&::-webkit-slider-thumb]:bg-[#1e1e1e] [&::-webkit-slider-thumb]:shadow-[0_0_0_4px_#1e1e1e]';

const trackTones: Record<string, string> = {
  plain: '[&::-webkit-slider-runnable-track]:bg-[#4b4b4b]',
  temperature: '[&::-webkit-slider-runnable-track]:bg-[linear-gradient(to_right,#0a7cf5,#808080,#f5820a)]',
  tint: '[&::-webkit-slider-runnable-track]:bg-[linear-gradient(to_right,#00f000,#808080,#f000f0)]',
};

function SliderRow({ label, at, value, tone = 'plain', dim }: { label: string; at: number; value: string; tone?: string; dim?: boolean }) {
  return (
    <label className={clsx('flex h-7 items-center', dim ? 'pl-[31px] text-[#5c5c5c]' : 'pl-[51px]')}>
      <span className="w-[77px] shrink-0">{label}</span>
      <input type="range" defaultValue={at} step="any" className={clsx('h-[10px] min-w-0 flex-1', thumb, trackTones[tone], dim ? '[&::-webkit-slider-thumb]:border-[#4b4b4b]' : '[&::-webkit-slider-thumb]:border-[#b0b0b0]')} />
      <span className={clsx('w-[61px] shrink-0 pl-[7px]', !dim && 'text-[#4096f3]')}>{value}</span>
    </label>
  );
}

function Toggle({ label }: { label: string }) {
  return (
    <input
      type="checkbox"
      aria-label={label}
      defaultChecked
      className="mr-[27px] ml-auto h-3 w-[23px] appearance-none rounded-full bg-[radial-gradient(circle_at_17px_6px,#1e1e1e_4px,#b0b0b0_5px)]"
    />
  );
}

function SectionHead({ label, open }: { label: string; open?: boolean }) {
  return (
    <div className="flex h-10 items-center pl-3">
      <Chevron className={clsx('text-[#b0b0b0]', !open && '-rotate-90')} />
      <h3 className="ml-[9px] font-bold">{label}</h3>
      <Toggle label={label} />
    </div>
  );
}

function Lumetri() {
  return (
    <aside className="flex w-[319px] shrink-0 flex-col overflow-hidden bg-[#1e1e1e]">
      <div className="flex h-11 shrink-0 items-start pt-1">
        <div className="flex h-8 min-w-0 flex-1 items-stretch justify-end pr-[9px] whitespace-nowrap">
          <button>emplates</button>
          <button className="ml-8">Essential Sound</button>
          <div className="ml-[35px] flex h-7 w-[87px] shrink-0 items-center justify-between border-b border-[#e0e0e0] pt-1 text-[#e0e0e0]">
            <button>Lumetri Color</button>
            <MenuLines />
          </div>
        </div>
        <MoreTabs />
      </div>
      <div className="flex h-[30px] shrink-0 items-center gap-[19px] pl-[19px]">
        <button className="border-b-2 border-[#e0e0e0] pt-0.5 leading-4 text-[#e0e0e0]">Edit</button>
        <button>Settings</button>
      </div>
      <div className="mt-3 flex gap-1 pr-[9px] pl-[17px]">
        <button className="flex h-6 flex-[131] items-center gap-1.5 rounded-[4px] border border-[#323232] bg-[#0d0d0d] pl-1.5 whitespace-nowrap">
          <Icon w={15} h={15}>
            <path d="M0 0h11v7H6v4H0z" fill="currentColor" stroke="none" />
            <path d="M1.500 1v10M9.500 1v5" stroke="#0d0d0d" strokeDasharray="1 1" />
            <path d="M5.500 6.500h9v8h-9z" fill="#0d0d0d" />
            <path d="M7.500 10v1M9.500 9v4M11.500 9v4M13 10v1M6 11h8" />
          </Icon>
          <span>Source · C0001....</span>
        </button>
        <button className="relative flex h-6 flex-[158] items-center gap-1.5 rounded-[4px] bg-[#4b4b4b] pl-2 whitespace-nowrap text-[#c8c8c8]">
          <Icon w={14} h={14}>
            <path d="M7 0v14M3 4h3M0 7h6M2 10h4M8 4h5M8 7h4M8 10h6" strokeWidth="1.600" />
          </Icon>
          <span>Feature Film · C0001....</span>
          <svg width="4" height="4" className="absolute right-1 bottom-1">
            <path d="M4 0v4H0z" fill="currentColor" />
          </svg>
        </button>
      </div>
      <div className="mt-3 flex items-center pr-[22px] pl-[17px]">
        <Dropdown label="Effect" value="Lumetri Color" className="h-6 flex-1" />
        <Fx className="ml-[9px] text-[18px] leading-6" />
        <button aria-label="Reset effect" className="ml-3">
          <Icon w={15} h={12}>
            <path d="M3 5Q6 1.500 9 2t4.500 5" strokeWidth="1.800" />
            <path d="M.5 7.500h6M12 7.500h3M0 10.500h15" strokeWidth="1.400" />
            <path d="M.5 1v6.500h6z" fill="currentColor" stroke="none" />
          </Icon>
        </button>
      </div>
      <div className="mt-[11px] border-t border-[#303030]">
        <SectionHead label="Basic Correction" open />
        <div className="mt-px flex items-center pr-[19px] pl-[31px]">
          <span className="w-[59px]">Input LUT</span>
          <Dropdown label="Input LUT" value="None" className="h-6 flex-1" />
        </div>
        <div className="mt-[27px] flex gap-2 pl-[141px]">
          <button className="flex h-6 w-[63px] items-center gap-2 rounded-[4px] border border-[#323232] bg-[#0d0d0d] pl-1.5">
            <Icon w={14} h={14}>
              <path d="M0 14l9-9" strokeWidth="2" />
              <path d="M4 0l1 2 2 .8-2 .8-1 2-1-2-2-.8 2-.8zM12 0l.6 1.400L14 2l-1.400.6L12 4l-.6-1.400L10 2l1.400-.6zM12 7h2v2h-2zM9 1h1v1H9z" fill="currentColor" stroke="none" />
            </Icon>
            Auto
          </button>
          <button className="h-6 w-[45px] rounded-[4px] border border-[#323232] bg-[#0d0d0d] leading-4">Reset</button>
        </div>
        <div className="mt-[9px]">
          <SliderRow label="Intensity" at={51} value="50,0" dim />
        </div>
        <div className="mt-1 flex h-8 items-center pl-[33px]">
          <Chevron />
          <span className="ml-2">Color</span>
        </div>
        <div className="flex h-[30px] items-center pl-[51px]">
          <span className="w-[95px]">White Balance</span>
          <button aria-label="Eyedropper">
            <Icon w={15} h={15}>
              <path d="M11 0q3-1 4 1 .5 2-1 3.500l-2 1.500 1 1-1.500 1.500-5-5L8 2l1 1z" fill="currentColor" stroke="none" />
              <path d="M7.500 5.500l-6 6.500L1 14l2-.5 6.500-6" strokeWidth="1.200" />
            </Icon>
          </button>
        </div>
        <div className="mt-[7px]">
          <SliderRow label="Temperature" at={47.5} value="-7,0" tone="temperature" />
          <SliderRow label="Tint" at={49} value="-5,0" tone="tint" />
          <SliderRow label="Saturation" at={51.5} value="100,0" />
        </div>
        <div className="mt-1 flex h-8 items-center pl-[33px]">
          <Chevron />
          <span className="ml-2">Light</span>
        </div>
        <div className="mt-px mb-0.5">
          <SliderRow label="Exposure" at={52.5} value="0,1" />
          {['Contrast', 'Highlights', 'Shadows', 'Whites', 'Blacks'].map((l) => (
            <SliderRow key={l} label={l} at={51.5} value="0,0" />
          ))}
        </div>
      </div>
      {['Creative', 'Curves', 'Color Wheels & Match', 'HSL Secondary', 'Vignette'].map((s) => (
        <div key={s}>
          <div className="mr-[9px] border-t border-[#303030]" />
          <SectionHead label={s} />
        </div>
      ))}
    </aside>
  );
}

export default function App() {
  return (
    <div className="flex h-screen min-h-[1000px] flex-col overflow-hidden bg-black font-['Noto_Sans_CJK_JP','Open_Sans',sans-serif] text-[11px] leading-4 text-[#b0b0b0]">
      <TopBars />
      <main className="flex min-h-0 flex-1 gap-1 py-0.5 pl-px">
        <div className="flex min-w-0 flex-1 flex-col gap-1">
          <div className="flex min-h-0 flex-1 gap-1">
            <Mixer />
            <Program />
          </div>
          <div className="flex h-84 shrink-0 gap-1">
            <Tools />
            <Timeline />
            <Meters />
          </div>
        </div>
        <Lumetri />
      </main>
      <footer className="h-4 shrink-0 bg-[#1e1e1e]" />
    </div>
  );
}
